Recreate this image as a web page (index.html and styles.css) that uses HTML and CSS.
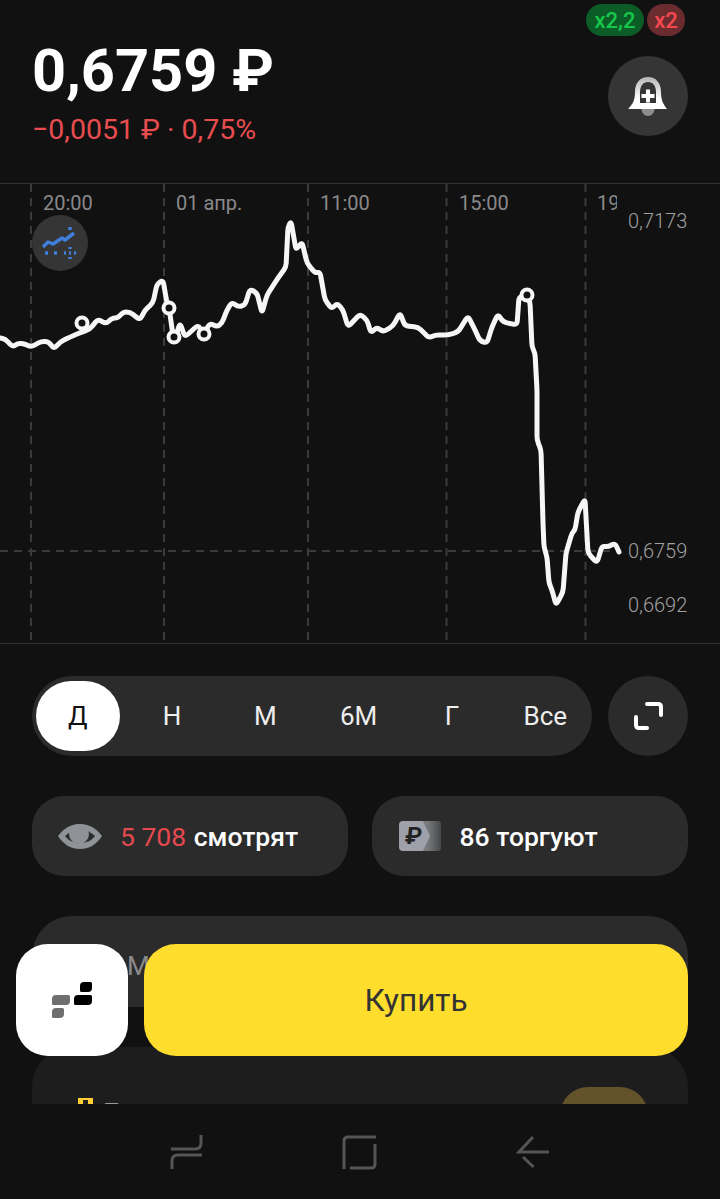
FILE: index.html
```html
<!DOCTYPE html>
<html lang="ru">
<head>
  <meta charset="UTF-8">
  <meta name="viewport" content="width=device-width, initial-scale=1.0">
  <title>Курс</title>
  <link rel="stylesheet" href="styles.css">
</head>
<body>
  <div class="page">
    <div class="content">

      <!-- Price header -->
      <header class="header">
        <div class="badges">
          <span class="badge badge-green">x2,2</span>
          <span class="badge badge-red">x2</span>
        </div>
        <div>
          <div class="price">0,6759 ₽</div>
          <div class="change">−0,0051 ₽ · 0,75%</div>
        </div>
        <button class="round-btn bell-btn">
          <svg width="40" height="40" viewBox="0 0 40 40">
            <defs>
              <linearGradient id="bell-fill" x1="0" y1="0" x2="0" y2="1">
                <stop offset="0" stop-color="#b5b5b5"/>
                <stop offset="0.7" stop-color="#ffffff"/>
              </linearGradient>
            </defs>
            <circle cx="20" cy="33.500" r="6.500" fill="#8c8c8c"/>
            <path d="M0 33C5 28 7 24 7 16C7 7 12 1 20 1C28 1 33 7 33 16C33 24 35 28 39 33Z" fill="url(#bell-fill)"/>
            <path d="M12 27H28V16C28 10 25 6 20 6C15 6 12 10 12 16Z" fill="#353535"/>
            <path d="M18 13.500H22V18H26.500V22H22V26.500H18V22H13.500V18H18Z" fill="#fff"/>
          </svg>
        </button>
      </header>

      <!-- Chart -->
      <section class="chart">
        <svg class="chart-svg" width="720" height="459" viewBox="0 184 720 459">
          <defs>
            <clipPath id="label-clip"><rect x="0" y="184" width="617" height="40"/></clipPath>
          </defs>
          <g class="grid">
            <path d="M31 184V643M164 184V643M308 184V643M446.500 184V643M585.500 184V643"/>
            <path d="M0 551H620"/>
          </g>
          <g class="time-label" clip-path="url(#label-clip)">
            <text x="43" y="210">20:00</text>
            <text x="176" y="210">01 апр.</text>
            <text x="320" y="210">11:00</text>
            <text x="459" y="210">15:00</text>
            <text x="597" y="210">19:00</text>
          </g>
          <g class="price-label">
            <text x="628" y="228">0,7173</text>
            <text x="628" y="558">0,6759</text>
            <text x="628" y="612">0,6692</text>
          </g>

          <circle cx="60" cy="243" r="28" fill="#353535"/>
          <g class="chart-icon">
            <path d="M43 247L48 242L53 244L62 238L65 240L74 233"/>
            <path d="M70 227V230M45 253H48M54 253H57M64 253H66M69 253H71M74 253H76M70 247V249M70 257V259"/>
          </g>

          <path id="price-line" class="line"/>
          <circle class="marker" cx="82" cy="323" r="5.500"/>
          <circle class="marker" cx="169" cy="308" r="5.500"/>
          <circle class="marker" cx="174" cy="337" r="5.500"/>
          <circle class="marker" cx="204" cy="334" r="5.500"/>
          <circle class="marker" cx="527" cy="295" r="5.500"/>
        </svg>
      </section>

      <!-- Period switch -->
      <div class="period-row">
        <div class="periods">
          <span class="period active"><span class="period-pill">Д</span></span>
          <span class="period">Н</span>
          <span class="period">М</span>
          <span class="period">6М</span>
          <span class="period">Г</span>
          <span class="period">Все</span>
        </div>
        <button class="round-btn">
          <svg width="32" height="32" viewBox="0 0 32 32" class="expand-icon">
            <path d="M15 4H26Q29 4 29 7V15"/>
            <path d="M4 17V25Q4 28 7 28H15"/>
          </svg>
        </button>
      </div>

      <!-- Watching and trading counters -->
      <div class="stats">
        <div class="stat stat-watch">
          <svg width="44" height="27" viewBox="0 0 44 27">
            <path d="M0 13C6 5 13 1 22 1C31 1 38 5 44 13C38 22 31 26 22 26C13 26 6 22 0 13Z" fill="#8f9297"/>
            <path d="M7 13C11 9 16 7 22 7C28 7 33 9 37 13C33 18 28 20 22 20C16 20 11 18 7 13Z" fill="#2b2b2c"/>
            <circle cx="21" cy="11" r="10" fill="#8f9297"/>
          </svg>
          <span><span class="red">5 708</span> смотрят</span>
        </div>
        <div class="stat stat-trade">
          <svg width="42" height="30" viewBox="0 0 42 30">
            <defs>
              <linearGradient id="tag-fill" x1="0" y1="0" x2="1" y2="0">
                <stop offset="0.4" stop-color="#777a7d"/>
                <stop offset="1" stop-color="#47484a"/>
              </linearGradient>
            </defs>
            <path d="M20 0H39Q42 0 42 3V27Q42 30 39 30H20Z" fill="url(#tag-fill)"/>
            <path d="M4 0H24L31 15L24 30H4Q0 30 0 26V4Q0 0 4 0Z" fill="#9ea1aa"/>
            <text class="tag-ruble" x="6" y="23">₽</text>
          </svg>
          <span>86 торгуют</span>
        </div>
      </div>

      <!-- Cards under the floating buttons -->
      <div class="card card-top"><span class="card-letter">М</span></div>
      <div class="card card-bottom">
        <div class="card-title">
          <span class="card-logo"></span>
          <span>Пульс</span>
        </div>
        <span class="card-action"></span>
      </div>
    </div>

    <!-- Floating actions -->
    <div class="actions">
      <button class="logo-btn">
        <svg width="40" height="36" viewBox="0 0 40 36">
          <path d="M32 0H38.500Q40 0 40 1.500V6Q40 10 36 10H29.500Q28 10 28 8.500V4Q28 0 32 0Z" fill="#000"/>
          <path d="M26 13H38.500Q40 13 40 14.500V19Q40 23 36 23H23.500Q22 23 22 21.500V17Q22 13 26 13Z" fill="#000"/>
          <path d="M4 13H16.500Q18 13 18 14.500V19Q18 23 14 23H1.500Q0 23 0 21.500V17Q0 13 4 13Z" fill="#6f6f6f"/>
          <path d="M4 26H10.500Q12 26 12 27.500V32Q12 36 8 36H1.500Q0 36 0 34.500V30Q0 26 4 26Z" fill="#6f6f6f"/>
        </svg>
      </button>
      <button class="buy-btn">Купить</button>
    </div>

    <!-- Android navigation bar -->
    <nav class="navbar">
      <svg class="nav-icon" width="36" height="36" viewBox="0 0 36 36">
        <path d="M3 14H27Q33 14 33 8V0"/>
        <path d="M34 20H10Q4 20 4 26V34"/>
      </svg>
      <svg class="nav-icon" width="36" height="36" viewBox="0 0 36 36">
        <path d="M34 2H6Q2 2 2 6V34"/>
        <path d="M8 33H29Q33 33 33 29V9"/>
      </svg>
      <svg class="nav-icon" width="36" height="36" viewBox="0 0 36 36">
        <path d="M33 17H3L17 2"/>
        <path d="M7 22L17.500 32"/>
      </svg>
    </nav>
  </div>
  <script src="chart.js"></script>
</body>
</html>
```

FILE: styles.css
```css
/* Overall Styling */
body {
  margin: 0;
  background-color: #111112;
  font-family: Roboto, 'Noto Sans', sans-serif;
  color: #fff;
}

button {
  border: none;
  padding: 0;
  font-family: inherit;
}

.page {
  position: relative;
  width: 720px;
  height: 1199px;
  overflow: hidden;
}

.content {
  height: 1104px;
  overflow: hidden;
}

/* Header */
.header {
  position: relative;
  display: flex;
  justify-content: space-between;
  box-sizing: border-box;
  height: 183px;
  padding: 38px 32px 0;
}

.badges {
  position: absolute;
  top: 4px;
  left: 586px;
  display: flex;
  gap: 3px;
}

.badge {
  display: flex;
  align-items: center;
  justify-content: center;
  height: 32px;
  border-radius: 16px;
  font-size: 22px;
  font-weight: 500;
}

.badge-green {
  width: 58px;
  background-color: #0c5c28;
  color: #18c64a;
}

.badge-red {
  width: 38px;
  background-color: #6b2c2f;
  color: #f4484e;
}

.price {
  font-size: 59.5px;
  font-weight: 700;
  line-height: 66px;
}

.change {
  margin-top: 10px;
  font-size: 28.5px;
  line-height: 32px;
  color: #e84c4f;
}

.round-btn {
  display: flex;
  align-items: center;
  justify-content: center;
  flex-shrink: 0;
  width: 80px;
  height: 80px;
  border-radius: 50%;
  background-color: #2b2b2c;
}

.bell-btn {
  margin-top: 18px;
  background-color: #353535;
}

.expand-icon path {
  fill: none;
  stroke: #fff;
  stroke-width: 4;
  stroke-linecap: round;
}

/* Chart */
.chart {
  height: 459px;
  border-top: 1px solid #333;
  border-bottom: 1px solid #333;
}

.chart-svg {
  display: block;
}

.grid path {
  fill: none;
  stroke: #3b3b3b;
  stroke-width: 2;
  stroke-dasharray: 8 6;
}

.time-label text {
  font-size: 20px;
  fill: #8a8a8a;
}

.price-label text {
  font-size: 20px;
  font-weight: 300;
  fill: #a0a0a0;
}

.chart-icon path {
  fill: none;
  stroke: #3f7fd9;
  stroke-width: 3.5;
  stroke-linejoin: round;
}

.line {
  fill: none;
  stroke: #f6f6f6;
  stroke-width: 5;
  stroke-linejoin: round;
  stroke-linecap: round;
}

.marker {
  fill: #111112;
  stroke: #f6f6f6;
  stroke-width: 4;
}

/* Period switch */
.period-row {
  display: flex;
  gap: 16px;
  padding: 32px 32px 0;
}

.periods {
  display: grid;
  grid-template-columns: repeat(6, 1fr);
  flex: 1;
  height: 80px;
  border-radius: 40px;
  background-color: #2b2b2c;
}

.period {
  display: flex;
  align-items: center;
  justify-content: center;
  font-size: 26px;
  color: #eee;
}

.period-pill {
  display: flex;
  align-items: center;
  justify-content: center;
  width: 84px;
  height: 70px;
  margin-right: 2px;
  border-radius: 35px;
  background-color: #fff;
  color: #111;
}

/* Counters */
.stats {
  display: flex;
  gap: 24px;
  padding: 40px 32px 0;
}

.stat {
  display: flex;
  align-items: center;
  flex: 1;
  height: 80px;
  border-radius: 32px;
  background-color: #2b2b2c;
  font-size: 26.5px;
  font-weight: 500;
}

.stat-watch {
  gap: 18px;
  padding-left: 26px;
}

.stat-trade {
  gap: 19px;
  padding-left: 27px;
}

.red {
  margin-right: 1px;
  font-weight: 400;
  color: #e5494e;
}

.tag-ruble {
  font-size: 24px;
  font-weight: 700;
  fill: #222;
  transform: skewX(-6deg);
  transform-origin: 14px 15px;
}

/* Cards */
.card {
  margin: 0 32px;
  border-radius: 40px;
}

.card-top {
  height: 91px;
  margin-top: 40px;
  border-radius: 40px 40px 0 0;
  background-color: #2b2b2c;
  padding: 35px 0 0 95px;
  box-sizing: border-box;
  font-size: 26px;
  color: #8a8a8a;
}

.card-bottom {
  display: flex;
  justify-content: space-between;
  height: 140px;
  margin-top: 40px;
  background-color: #1d1d1e;
  padding: 40px 40px 0 46px;
  box-sizing: border-box;
}

.card-title {
  display: flex;
  gap: 10px;
  padding-top: 11px;
  font-size: 24px;
  color: #999;
}

.card-logo {
  position: relative;
  width: 15px;
  height: 15px;
  background-color: #ffcf33;
}

.card-logo::after {
  content: "";
  position: absolute;
  top: 2px;
  left: 5px;
  width: 5px;
  height: 6px;
  background-color: #222;
}

.card-action {
  width: 88px;
  height: 56px;
  border-radius: 28px;
  background-color: #64522a;
}

/* Floating actions */
.actions {
  position: absolute;
  top: 944px;
  left: 16px;
  right: 32px;
  display: flex;
  gap: 16px;
}

.logo-btn {
  display: flex;
  align-items: center;
  justify-content: center;
  width: 112px;
  height: 112px;
  border-radius: 32px;
  background-color: #fff;
}

.buy-btn {
  flex: 1;
  height: 112px;
  border-radius: 32px;
  background-color: #ffdd2d;
  font-size: 31.5px;
  color: #333;
}

/* Navigation bar */
.navbar {
  display: flex;
  justify-content: center;
  gap: 138px;
  box-sizing: border-box;
  height: 95px;
  padding-top: 31px;
  background-color: #111112;
}

.nav-icon path {
  fill: none;
  stroke: #555;
  stroke-width: 3;
}
```

FILE: chart.js
```js
// Price points of the day, in chart pixels
const points = [
  [0,338],[5,339],[13,347],[18,343],[25,344],[31,347],[42,341],[49,342],[54,349],[60,342],
  [70,337],[82,332],[90,329],[98,319],[106,324],[112,318],[118,318],[123,312],[130,312],[140,320],
  [145,310],[153,303],[157,284],[163,280],[167,303],[169,308],[173,335],[176,336],[180,323],[185,337],
  [198,325],[204,334],[210,323],[217,327],[222,323],[227,310],[232,302],[238,307],[245,305],[250,289],
  [257,293],[262,313],[267,295],[278,278],[286,267],[288,227],[291,221],[296,250],[302,242],[307,263],
  [315,273],[320,272],[325,300],[332,309],[337,303],[343,310],[348,327],[360,314],[367,320],[371,333],
  [377,327],[383,332],[393,326],[400,313],[405,326],[418,327],[423,332],[429,338],[435,335],[448,335],
  [458,332],[468,316],[475,330],[480,341],[487,343],[492,327],[498,314],[503,322],[517,325],[519,297],
  [527,295],[530,302],[532,347],[535,353],[537,390],[537,440],[541,450],[543,523],[544,547],[547,557],
  [549,583],[552,590],[556,605],[563,592],[566,553],[572,533],[575,530],[578,512],[585,499],[588,553],
  [597,563],[602,546],[608,547],[615,543],[619,552]
];

// Round every corner of the line a little
const radius = 4;

function towards(from, to) {
  const length = Math.hypot(to[0] - from[0], to[1] - from[1]);
  const part = Math.min(radius / length, 0.5);
  return [from[0] + (to[0] - from[0]) * part, from[1] + (to[1] - from[1]) * part];
}

let d = `M${points[0][0]} ${points[0][1]}`;
for (let i = 1; i < points.length - 1; i++) {
  const start = towards(points[i], points[i - 1]);
  const end = towards(points[i], points[i + 1]);
  d += `L${start[0]} ${start[1]}Q${points[i][0]} ${points[i][1]} ${end[0]} ${end[1]}`;
}
const last = points[points.length - 1];
d += `L${last[0]} ${last[1]}`;

document.getElementById('price-line').setAttribute('d', d);
```
